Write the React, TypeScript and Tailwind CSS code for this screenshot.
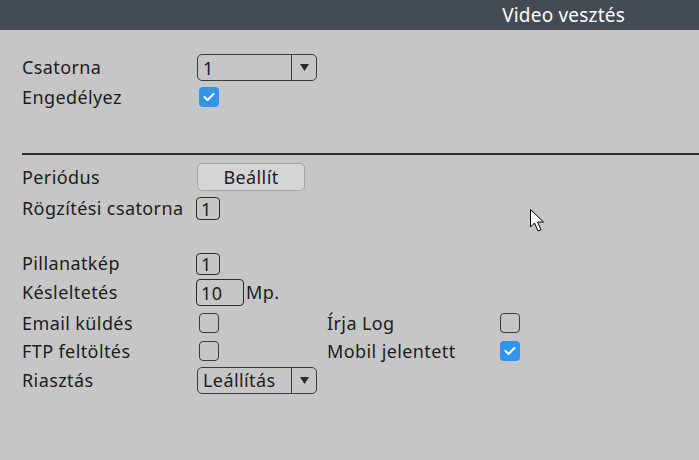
import React from "react";

const font = { fontFamily: '"Noto Sans", "Open Sans", sans-serif' };

function Checkbox({ checked }: { checked?: boolean }) {
  if (checked) {
    return (
      <div className="w-[20px] h-[20px] rounded-[4px] bg-[#2f95ef] flex items-center justify-center">
        <svg width="12" height="10" viewBox="0 0 12 10">
          <path d="M1.5 5 L4.5 8 L10.5 2" stroke="white" strokeWidth="2" fill="none" strokeLinecap="round" strokeLinejoin="round" />
        </svg>
      </div>
    );
  }
  return <div className="w-[20px] h-[20px] rounded-[4px] border border-[#3a3a3a]" />;
}

function Dropdown({ value }: { value: string }) {
  return (
    <div className="w-[120px] h-[27px] rounded-[5px] border border-[#3a3a3a] flex">
      <div className="flex-1 pl-[5px] flex items-center leading-none">{value}</div>
      <div className="w-[25px] border-l border-[#3a3a3a] flex items-center justify-center">
        <svg width="9" height="7" viewBox="0 0 9 7">
          <path d="M0 0 H9 L4.5 7 Z" fill="#2a2a2a" />
        </svg>
      </div>
    </div>
  );
}

function SmallBox({ value, w = "w-[24px]", h = "h-[23px]" }: { value: string; w?: string; h?: string }) {
  return (
    <div className={`${w} ${h} rounded-[4px] border border-[#2a2a2a] flex items-center pl-[4px] leading-none`}>
      {value}
    </div>
  );
}

export default function App() {
  return (
    <div className="relative w-[699px] h-[460px] bg-[#c6c6c6] text-[#1c1c1c] text-[18px] tracking-[0.4px] overflow-hidden" style={font}>
      {/* barra de título */}
      <div className="h-[30px] bg-[#444b53] flex items-center justify-end pr-[74px]">
        <span className="text-white text-[19px] tracking-[0.2px] leading-none">Video vesztés</span>
      </div>

      <div className="pl-[22px]">
        <div className="flex items-center h-[27px] mt-[24px]">
          <div className="w-[175px]">Csatorna</div>
          <Dropdown value="1" />
        </div>
        <div className="flex items-center h-[28px] mt-[2px]">
          <div className="w-[177px]">Engedélyez</div>
          <Checkbox checked />
        </div>
      </div>

      <div className="ml-[22px] mt-[42px] h-[2px] bg-[#2e2e2e]" />

      <div className="pl-[22px]">
        <div className="flex items-center h-[28px] mt-[8px]">
          <div className="w-[175px]">Periódus</div>
          <div className="w-[108px] h-[28px] rounded-[5px] border border-[#a4a4a4] bg-[#d5d5d5] flex items-center justify-center">
            Beállít
          </div>
        </div>
        <div className="flex items-center h-[27px] mt-[4px]">
          <div className="w-[174px]">Rögzítési csatorna</div>
          <SmallBox value="1" />
        </div>

        <div className="flex items-center h-[27px] mt-[28px]">
          <div className="w-[174px]">Pillanatkép</div>
          <SmallBox value="1" h="h-[22px]" />
        </div>
        <div className="flex items-center h-[27px] mt-[2px]">
          <div className="w-[174px]">Késleltetés</div>
          <SmallBox value="10" w="w-[48px]" h="h-[27px]" />
          <span className="ml-[2px]">Mp.</span>
        </div>
        <div className="flex items-center h-[28px] mt-[3px]">
          <div className="w-[177px]">Email küldés</div>
          <div className="w-[128px]"><Checkbox /></div>
          <div className="w-[173px]">Írja Log</div>
          <Checkbox />
        </div>
        <div className="flex items-center h-[28px]">
          <div className="w-[177px]">FTP feltöltés</div>
          <div className="w-[128px]"><Checkbox /></div>
          <div className="w-[173px]">Mobil jelentett</div>
          <Checkbox checked />
        </div>
        <div className="flex items-center h-[28px] mt-[1px]">
          <div className="w-[175px]">Riasztás</div>
          <Dropdown value="Leállítás" />
        </div>
      </div>

      {/* puntero del ratón */}
      <svg className="absolute left-[530px] top-[209px]" width="18" height="26" viewBox="0 0 18 26">
        <path d="M0.5 0.5 L0.5 18 L4.5 14 L8 22 L11 20.8 L7.6 13 L13.5 13 Z" fill="white" stroke="black" strokeWidth="1" />
      </svg>
    </div>
  );
}
